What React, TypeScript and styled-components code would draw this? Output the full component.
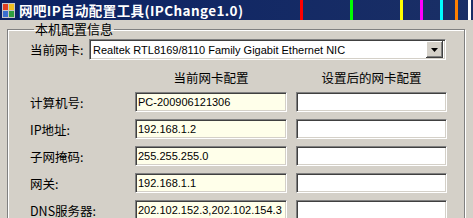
import React from 'react';
import styled, { createGlobalStyle } from 'styled-components';

const GlobalStyle = createGlobalStyle`
  html, body {
    margin: 0;
    padding: 0;
    background: #d4d0c8;
    overflow: hidden;
  }
  #root {
    width: 473px;
    height: 218px;
    overflow: hidden;
  }
`;

const Window = styled.div`
  width: 473px;
  height: 218px;
  overflow: hidden;
  background: #d4d0c8;
  display: flex;
  flex-direction: column;
  font-family: 'Noto Sans CJK SC', sans-serif;
`;

const TitleBar = styled.div`
  position: relative;
  height: 20px;
  flex: none;
  box-sizing: border-box;
  background: linear-gradient(90deg, #0b2263 0%, #1a2f66 100%);
  display: flex;
  align-items: center;
  padding: 0 0 0 2px;
`;

const Marker = styled.div<{ $left: number; $color: string }>`
  position: absolute;
  top: 0;
  left: ${(p) => p.$left}px;
  width: 3px;
  height: 20px;
  background: ${(p) => p.$color};
`;

const IconBox = styled.div`
  flex: none;
  width: 13px;
  height: 15px;
  display: flex;
  margin-right: 4px;
`;

const Title = styled.span`
  flex: none;
  color: #fff;
  font-family: 'Noto Sans CJK SC', serif;
  font-weight: 700;
  font-size: 13.5px;
  letter-spacing: 0.4px;
  white-space: nowrap;
`;

const Body = styled.div`
  flex: 1;
  padding: 0 8px 0 7px;
`;

const Group = styled.fieldset`
  margin: 0;
  padding: 1px 0 0 22px;
  border: 1px solid #808080;
  box-shadow: 1px 1px 0 #fff, inset 1px 1px 0 #fff;
  height: 240px;
  min-width: 0;
  box-sizing: border-box;
`;

const Legend = styled.legend`
  padding: 0 1px;
  margin-left: 4px;
  font-size: 13px;
  line-height: 18px;
  color: #000;
`;

const Row = styled.div<{ $top: number }>`
  display: flex;
  align-items: center;
  gap: 9px;
  margin-top: ${(p) => p.$top}px;
`;

const ComboRow = styled.div`
  display: flex;
  align-items: center;
  height: 21px;
`;

const Label = styled.div<{ $width: number }>`
  width: ${(p) => p.$width}px;
  flex: none;
  font-size: 12.5px;
  color: #000;
  white-space: nowrap;
`;

const sunken = `
  box-sizing: border-box;
  border-top: 1px solid #808080;
  border-left: 1px solid #808080;
  border-bottom: 1px solid #fff;
  border-right: 1px solid #fff;
  box-shadow: inset 1px 1px #404040, inset -1px -1px #d4d0c8;
`;

const Combo = styled.div`
  ${sunken}
  width: 357px;
  flex: none;
  height: 21px;
  background: #fff;
  display: flex;
  align-items: center;
  padding: 0 2px 0 3px;
`;

const ComboText = styled.div`
  flex: 1;
  font-family: 'Liberation Sans', Arial, sans-serif;
  font-size: 11px;
  color: #000;
  white-space: nowrap;
  overflow: hidden;
`;

const DropButton = styled.div`
  width: 17px;
  height: 17px;
  box-sizing: border-box;
  background: #d4d0c8;
  box-shadow: inset -1px -1px #404040, inset 1px 1px #fff, inset -2px -2px #808080;
  display: flex;
  align-items: center;
  justify-content: center;
`;

const Heading = styled.div<{ $width: number }>`
  width: ${(p) => p.$width}px;
  flex: none;
  font-size: 12.5px;
  text-align: center;
  color: #000;
  line-height: 18px;
`;

const Field = styled.div<{ $bg: string; $width: number }>`
  ${sunken}
  width: ${(p) => p.$width}px;
  flex: none;
  height: 20px;
  background: ${(p) => p.$bg};
  display: flex;
  align-items: center;
  padding: 0 2px;
  font-family: 'Liberation Sans', Arial, sans-serif;
  font-size: 11px;
  color: #000;
  white-space: nowrap;
  overflow: hidden;
`;

const AppIcon = () => (
  <IconBox>
    <svg width="13" height="15" viewBox="0 0 13 15">
      <rect x="0" y="0" width="13" height="15" fill="#c8c8c8" />
      <rect x="1" y="1" width="5" height="6" fill="#e04020" />
      <rect x="7" y="1" width="5" height="6" fill="#f0c020" />
      <rect x="1" y="8" width="5" height="6" fill="#3a70d0" />
      <rect x="7" y="8" width="5" height="6" fill="#30a040" />
    </svg>
  </IconBox>
);

const rows = [
  { label: '计算机号:', value: 'PC-200906121306' },
  { label: 'IP地址:', value: '192.168.1.2' },
  { label: '子网掩码:', value: '255.255.255.0' },
  { label: '网关:', value: '192.168.1.1' },
  { label: 'DNS服务器:', value: '202.102.152.3,202.102.154.3' },
];

const markers = [
  { left: 300, color: '#ff0000' },
  { left: 350, color: '#00ff00' },
  { left: 400, color: '#ffff00' },
  { left: 420, color: '#ff00ff' },
  { left: 440, color: '#00ffff' },
  { left: 455, color: '#ff8000' },
  { left: 468, color: '#ffffff' },
];

export default function App() {
  return (
    <>
      <GlobalStyle />
      <Window>
        <TitleBar>
          <AppIcon />
          <Title>网吧IP自动配置工具(IPChange1.0)</Title>
          {markers.map((m) => (
            <Marker key={m.left} $left={m.left} $color={m.color} />
          ))}
        </TitleBar>
        <Body>
          <Group>
            <Legend>本机配置信息</Legend>
            <ComboRow>
              <Label $width={59}>当前网卡:</Label>
              <Combo>
                <ComboText>Realtek RTL8169/8110 Family Gigabit Ethernet NIC</ComboText>
                <DropButton>
                  <svg width="7" height="4" viewBox="0 0 7 4">
                    <path d="M0 0 H7 L3.5 4 Z" fill="#000" />
                  </svg>
                </DropButton>
              </Combo>
            </ComboRow>
            <Row $top={9}>
              <Label $width={96}></Label>
              <Heading $width={152}>当前网卡配置</Heading>
              <Heading $width={151}>设置后的网卡配置</Heading>
            </Row>
            {rows.map((r, i) => (
              <Row key={r.label} $top={i === 0 ? 5 : 7}>
                <Label $width={96}>{r.label}</Label>
                <Field $bg="#ffffea" $width={152}>{r.value}</Field>
                <Field $bg="#ffffff" $width={151} />
              </Row>
            ))}
          </Group>
        </Body>
      </Window>
    </>
  );
}
